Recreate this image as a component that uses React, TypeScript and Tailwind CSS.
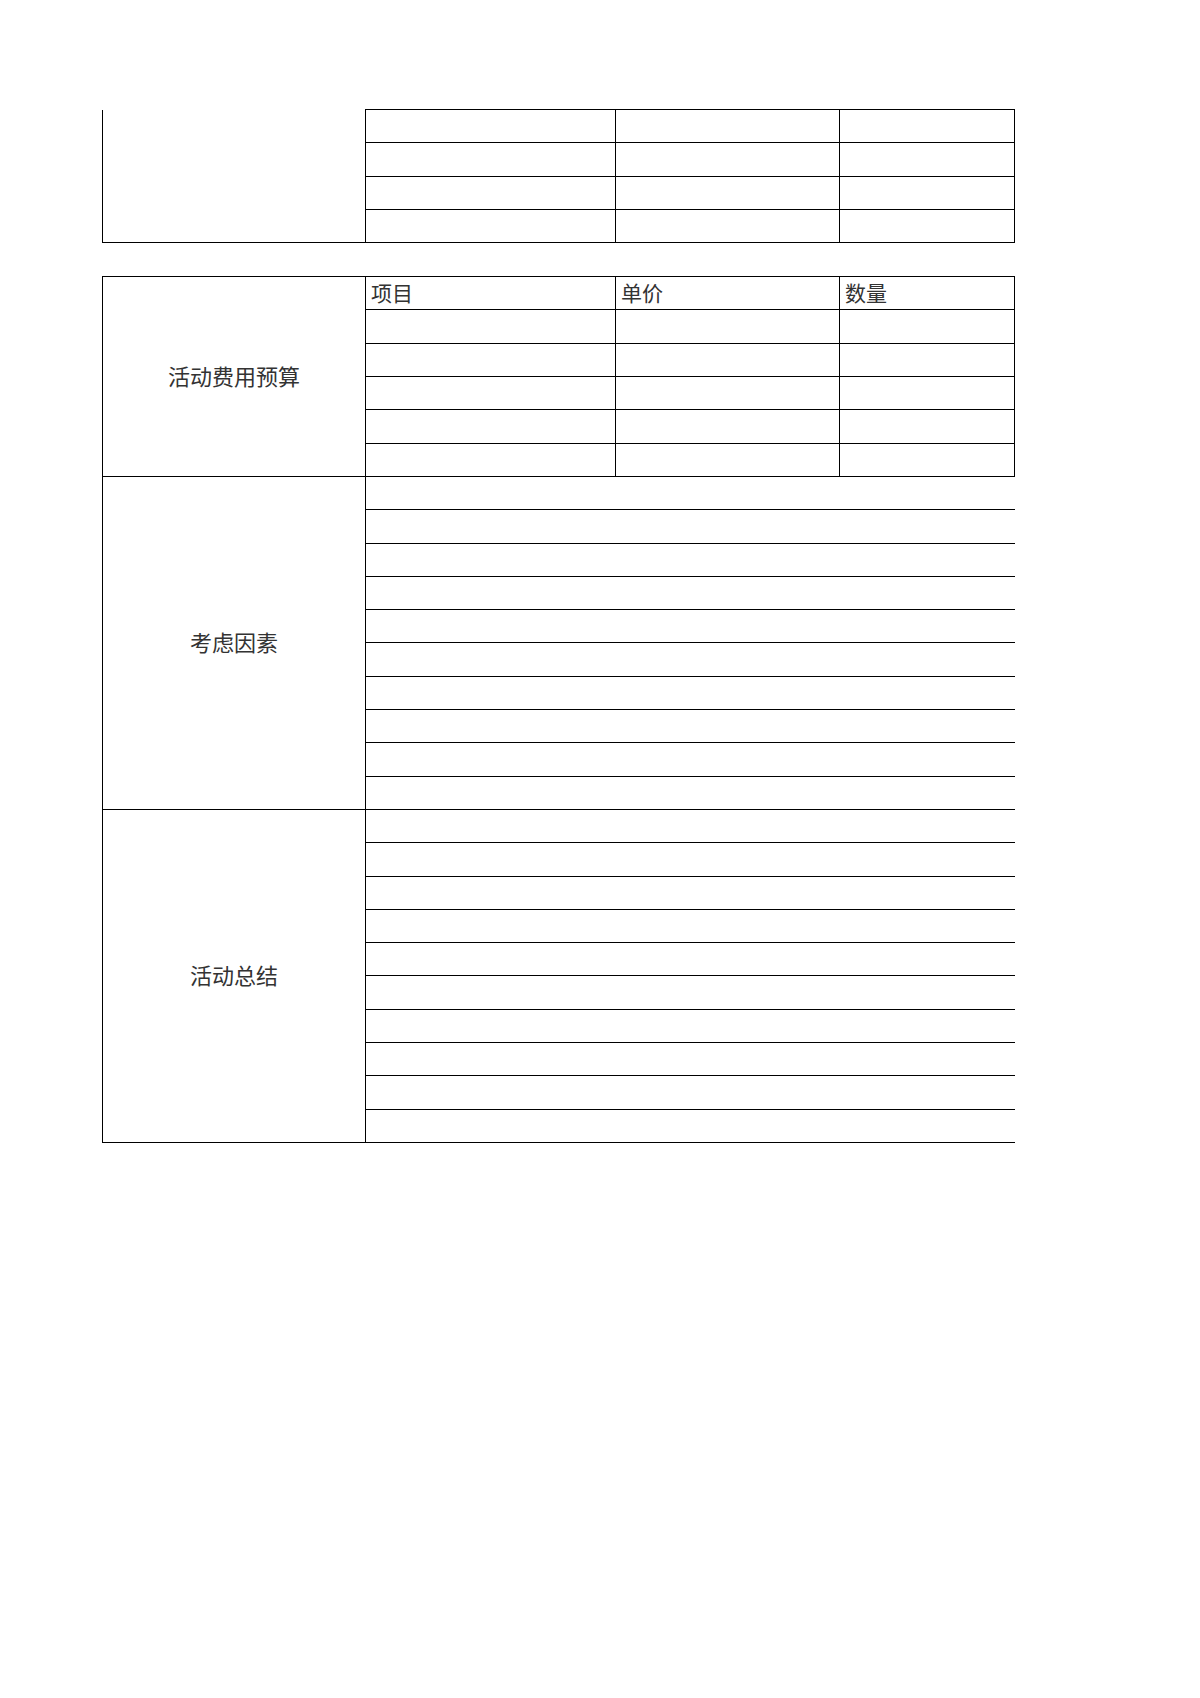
import React from 'react';

const rows = (n: number) => Array.from({ length: n }, (_, i) => i);

export default function App() {
  return (
    <div
      className="min-h-[1698px] w-[1200px] bg-white pt-[109px] pl-[102px] text-[#333]"
      style={{ fontFamily: '"Noto Sans CJK SC", "Noto Sans", sans-serif' }}
    >
      <table className="w-[912px] table-fixed border-collapse">
        <colgroup>
          <col className="w-[263px]" />
          <col className="w-[250px]" />
          <col className="w-[224px]" />
          <col className="w-[175px]" />
        </colgroup>
        <tbody>
          {rows(4).map((i) => (
            <tr key={i} className="h-[33.3px]">
              {i === 0 && (
                <td rowSpan={4} className="border-l border-b border-r border-black p-0"></td>
              )}
              <td className="border border-black p-0"></td>
              <td className="border border-black p-0"></td>
              <td className="border border-black p-0"></td>
            </tr>
          ))}
        </tbody>
      </table>

      <table className="mt-[33px] w-[912px] table-fixed border-collapse">
        <colgroup>
          <col className="w-[263px]" />
          <col className="w-[250px]" />
          <col className="w-[224px]" />
          <col className="w-[175px]" />
        </colgroup>
        <tbody>
          <tr className="h-[33.3px]">
            <td
              rowSpan={6}
              className="border border-black p-0 pb-[4px] text-center align-middle text-[22px] leading-none"
            >
              活动费用预算
            </td>
            <td className="border border-black p-0 pl-[5px] pb-[6px] align-bottom text-[21px] leading-none">项目</td>
            <td className="border border-black p-0 pl-[5px] pb-[6px] align-bottom text-[21px] leading-none">单价</td>
            <td className="border border-black p-0 pl-[5px] pb-[6px] align-bottom text-[21px] leading-none">数量</td>
          </tr>
          {rows(5).map((i) => (
            <tr key={i} className="h-[33.3px]">
              <td className="border border-black p-0"></td>
              <td className="border border-black p-0"></td>
              <td className="border border-black p-0"></td>
            </tr>
          ))}
          {rows(10).map((i) => (
            <tr key={'k' + i} className="h-[33.3px]">
              {i === 0 && (
                <td
                  rowSpan={10}
                  className="border border-black p-0 pb-[4px] text-center align-middle text-[22px] leading-none"
                >
                  考虑因素
                </td>
              )}
              <td colSpan={3} className="border-t border-b border-l border-black p-0"></td>
            </tr>
          ))}
          {rows(10).map((i) => (
            <tr key={'s' + i} className="h-[33.3px]">
              {i === 0 && (
                <td
                  rowSpan={10}
                  className="border border-black p-0 pb-[4px] text-center align-middle text-[22px] leading-none"
                >
                  活动总结
                </td>
              )}
              <td colSpan={3} className="border-t border-b border-l border-black p-0"></td>
            </tr>
          ))}
        </tbody>
      </table>
    </div>
  );
}
